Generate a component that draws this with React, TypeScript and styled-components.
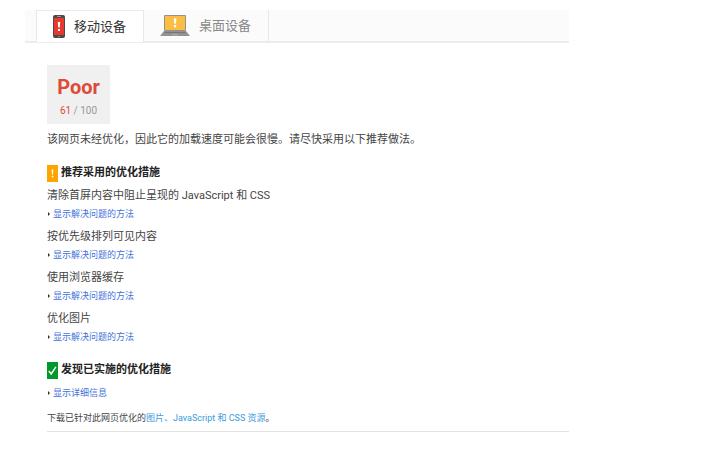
import React from "react";
import styled, { createGlobalStyle } from "styled-components";

const GlobalStyle = createGlobalStyle`
  * { box-sizing: border-box; }
  body {
    margin: 0;
    background: #fff;
    color: #444;
    font-family: Roboto, "Noto Sans CJK SC", sans-serif;
    font-size: 11px;
    line-height: 18px;
  }
  h2, p, ul { margin: 0; padding: 0; }
`;

const Page = styled.main`
  padding: 10px 149px 16px 25px;
`;

const TabBar = styled.div`
  display: flex;
  height: 33px;
  padding-left: 11px;
  background: #fbfbfb;
  border-bottom: 2px solid #ececec;
`;

const Tab = styled.button<{ $active?: boolean }>`
  display: flex;
  align-items: center;
  gap: 9px;
  height: ${(p) => (p.$active ? 32 : 31)}px;
  margin: 0;
  padding: 0 17px 0 16px;
  border: solid #e9e9e9;
  border-width: ${(p) => (p.$active ? "1px 1px 0" : "0 1px 0 0")};
  background: ${(p) => (p.$active ? "#fff" : "transparent")};
  color: ${(p) => (p.$active ? "#333" : "#888")};
  font-family: inherit;
  font-size: 13px;
  line-height: 20px;
  white-space: nowrap;
  cursor: pointer;
`;

const Report = styled.section`
  padding: 22px 0 0 22px;
`;

const ScoreCard = styled.div`
  display: inline-flex;
  flex-direction: column;
  align-items: center;
  width: 63px;
  padding: 10px 0 4px;
  background: #f0f0f0;
`;

const Rating = styled.strong`
  color: #dd4b39;
  font-size: 20px;
  font-weight: 700;
  line-height: 24px;
`;

const Score = styled.span`
  margin-top: 3px;
  color: #999;
  font-size: 10px;
  line-height: 18px;
`;

const ScoreValue = styled.span`
  color: #dd4b39;
`;

const Summary = styled.p`
  margin-top: 7px;
`;

const Heading = styled.h2`
  display: flex;
  align-items: center;
  gap: 3px;
  color: #222;
  font-size: 11px;
  font-weight: 700;
  line-height: 18px;
`;

const Group = styled.section`
  margin-top: 15px;
`;

const RuleList = styled.ul`
  display: flex;
  flex-direction: column;
  gap: 5px;
  margin-top: 5px;
  list-style: none;
`;

const Toggle = styled.a`
  display: flex;
  align-items: center;
  gap: 3px;
  width: max-content;
  color: #4272db;
  font-size: 9px;
  line-height: 18px;
  text-decoration: none;

  &::before {
    content: "";
    margin-left: 1px;
    border: solid transparent;
    border-width: 2px 0 2px 2px;
    border-left-color: #333;
  }
`;

const DetailToggle = styled(Toggle)`
  margin-top: 5px;
`;

const Download = styled.p`
  && {
    margin-top: 7px;
    padding-bottom: 4px;
  }
  border-bottom: 1px solid #e2e2e2;
  font-size: 9px;
`;

const DownloadLink = styled.a`
  color: #3b9bdd;
  text-decoration: none;
`;

const PhoneIcon = () => (
  <svg width="12" height="23" viewBox="0 0 12 23" aria-hidden="true">
    <rect width="12" height="23" rx="2" fill="#4a4a4a" />
    <rect x="1" y="3" width="10" height="17" fill="#e8382f" />
    <path d="M4 1.5h4" stroke="#aaa" strokeWidth="0.8" />
    <path d="M5 21.5h2" stroke="#999" strokeWidth="0.8" />
    <path d="M4.8 7h2.4l-.4 5.500H5.200zM5 14h2v2H5z" fill="#fff" />
  </svg>
);

const LaptopIcon = () => (
  <svg width="30" height="22" viewBox="0 0 30 22" aria-hidden="true">
    <rect x="4" y="0" width="22" height="16" rx="1" fill="#929292" />
    <rect x="5" y="1" width="20" height="14" fill="#fbbd43" />
    <path d="M13.8 3.500h2.600l-.5 5.200h-1.600zM14 10h2.200v2.200H14z" fill="#fff" />
    <path d="M4 16h22l4 5H0z" fill="#929292" />
    <path d="M5 17h20l.8 1H4.200z" fill="#777" />
    <path d="M12.500 19.200h5l.5 1h-6z" fill="#b5b5b5" />
  </svg>
);

const WarnIcon = () => (
  <svg width="11" height="17" viewBox="0 0 11 17" aria-hidden="true">
    <rect width="11" height="17" fill="#ffa400" />
    <path d="M4.600 4.500h1.800l-.4 5h-1zM4.700 10.700h1.600v1.600H4.700z" fill="#fff" />
  </svg>
);

const CheckIcon = () => (
  <svg width="11" height="17" viewBox="0 0 11 17" aria-hidden="true">
    <rect width="11" height="17" fill="#009a2b" />
    <path d="M1.900 9l2.300 3L8.900 4.800" fill="none" stroke="#fff" strokeWidth="1.500" />
  </svg>
);

const rules = [
  "清除首屏内容中阻止呈现的 JavaScript 和 CSS",
  "按优先级排列可见内容",
  "使用浏览器缓存",
  "优化图片",
];

export default function App() {
  return (
    <>
      <GlobalStyle />
      <Page lang="zh-CN">
        <TabBar role="tablist">
          <Tab $active type="button" role="tab" aria-selected="true">
            <PhoneIcon />
            移动设备
          </Tab>
          <Tab type="button" role="tab" aria-selected="false">
            <LaptopIcon />
            桌面设备
          </Tab>
        </TabBar>
        <Report>
          <ScoreCard>
            <Rating>Poor</Rating>
            <Score>
              <ScoreValue>61</ScoreValue> / 100
            </Score>
          </ScoreCard>
          <Summary>该网页未经优化，因此它的加载速度可能会很慢。请尽快采用以下推荐做法。</Summary>
          <Group>
            <Heading>
              <WarnIcon />
              推荐采用的优化措施
            </Heading>
            <RuleList>
              {rules.map((rule) => (
                <li key={rule}>
                  {rule}
                  <Toggle href="#fix">显示解决问题的方法</Toggle>
                </li>
              ))}
            </RuleList>
          </Group>
          <Group>
            <Heading>
              <CheckIcon />
              发现已实施的优化措施
            </Heading>
            <DetailToggle href="#details">显示详细信息</DetailToggle>
          </Group>
          <Download>
            下载已针对此网页优化的
            <DownloadLink href="#download">图片、JavaScript 和 CSS 资源</DownloadLink>。
          </Download>
        </Report>
      </Page>
    </>
  );
}
